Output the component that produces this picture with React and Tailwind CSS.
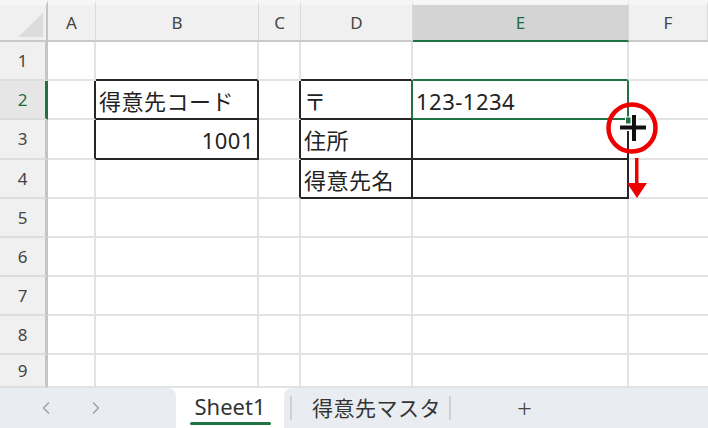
import { ChevronLeft, ChevronRight } from 'lucide-react';

const cols = [
  { key: 'A', w: 48 },
  { key: 'B', w: 163 },
  { key: 'C', w: 42 },
  { key: 'D', w: 112 },
  { key: 'E', w: 216 },
  { key: 'F', w: 79 },
];

const rowHeights = [39, 39, 40, 39, 39, 39, 39, 39, 33];

// cells that carry the black table border
const boxed = new Set(['B2', 'B3', 'D2', 'D3', 'D4', 'E2', 'E3', 'E4']);

const values = {
  B2: { text: '得意先コード' },
  B3: { text: '1001', right: true },
  D2: { text: '〒' },
  D3: { text: '住所' },
  D4: { text: '得意先名' },
  E2: { text: '123-1234' },
};

function cellId(r, c) {
  if (c < 0 || c >= cols.length) return '';
  return cols[c].key + r;
}

function rightClass(r, c) {
  const me = cellId(r, c);
  const next = cellId(r, c + 1);
  if (me === 'E2' || next === 'E2') return 'border-r-[#217346]';
  if (boxed.has(me) || boxed.has(next)) return 'border-r-[#262626]';
  return 'border-r-[#e3e3e3]';
}

function bottomClass(r, c) {
  const me = cellId(r, c);
  const below = cellId(r + 1, c);
  if (me === 'E2' || below === 'E2') return 'border-b-[#217346]';
  if (boxed.has(me) || boxed.has(below)) return 'border-b-[#262626]';
  return 'border-b-[#e3e3e3]';
}

function Cell({ r, c }) {
  const id = cellId(r, c);
  const v = values[id];
  const isLast = c === cols.length - 1;
  return (
    <div
      className={`flex items-center border-b-2 ${isLast ? '' : 'border-r-2'} ${rightClass(r, c)} ${bottomClass(r, c)} px-[3px] overflow-hidden ${v && v.right ? 'justify-end pr-[3px]' : ''}`}
    >
      {v && (
        <span className="text-[22px] tracking-[0.5px] leading-none text-[#222] whitespace-nowrap pt-[2px]">{v.text}</span>
      )}
    </div>
  );
}

export default function App() {
  return (
    <div
      className="relative w-[708px] h-[428px] overflow-hidden bg-white"
      style={{ fontFamily: '"Noto Sans", "Noto Sans CJK JP", sans-serif' }}
    >
      <div className="grid grid-cols-[48px_48px_163px_42px_112px_216px_1fr] grid-rows-[42px_39px_39px_40px_39px_39px_39px_39px_39px_33px] h-[388px]">
        {/* select-all corner */}
        <div className="relative bg-[#f0f0f0] border-t-[5px] border-[#f5f6f8] border-b-2 border-b-[#c9c9c9] border-r-2 border-r-[#c4c4c4]">
          <svg width="48" height="37" className="block">
            <polygon points="18,32 43,32 43,8" fill="#dcdcdc" />
          </svg>
        </div>
        {cols.map((col) => {
          const sel = col.key === 'E';
          return (
            <div
              key={col.key}
              className={`flex items-center justify-center border-t-[5px] border-t-[#f5f6f8] border-b-2 border-r ${
                sel ? 'bg-[#d4d4d4] border-b-[#217346] text-[#1b6b3c]' : 'bg-[#f0f0f0] border-b-[#c9c9c9] text-[#444]'
              } border-r-[#dadada] text-[17px]`}
            >
              {col.key}
            </div>
          );
        })}
        {rowHeights.map((h, i) => {
          const r = i + 1;
          const sel = r === 2;
          return [
            <div
              key={'h' + r}
              className={`flex items-center justify-center border-r-[3px] border-b-2 border-b-[#dddddd] text-[17px] ${
                sel ? 'bg-[#e6e6e6] border-r-[#217346] text-[#1b6b3c]' : 'bg-[#f0f0f0] border-r-[#c4c4c4] text-[#444]'
              }`}
            >
              {r}
            </div>,
            ...cols.map((col, c) => <Cell key={col.key + r} r={r} c={c} />),
          ];
        })}
      </div>

      {/* sheet tabs */}
      <div className="flex h-[40px] bg-white text-[#333]">
        <div className="w-[176px] bg-[#e9ecf0] rounded-tr-[8px] flex items-center pl-[36px] gap-[30px] text-[#9a9a9a]">
          <ChevronLeft size={20} strokeWidth={1.5} />
          <ChevronRight size={20} strokeWidth={1.5} />
        </div>
        <div className="w-[108px] flex flex-col items-center justify-end">
          <span className="text-[22px] leading-none mb-[5px]">Sheet1</span>
          <div className="w-[81px] h-[3px] rounded-full bg-[#217346] mb-[3px]" />
        </div>
        <div className="flex-1 bg-[#e9ecf0] rounded-tl-[8px] flex items-center">
          <div className="ml-[6px] w-[2px] h-[24px] bg-[#cdd0d4]" />
          <span className="ml-[20px] text-[21px] tracking-[0.5px] leading-none">得意先マスタ</span>
          <div className="ml-[8px] w-[2px] h-[24px] bg-[#cdd0d4]" />
          <span className="ml-[66px] text-[26px] leading-none font-light text-[#444]">+</span>
        </div>
      </div>

      {/* fill handle, cursor and drag annotation */}
      <svg className="absolute left-[598px] top-[96px]" width="70" height="108" viewBox="598 96 70 108">
        <rect x="625.5" y="117" width="7" height="7" fill="#217346" stroke="#fff" strokeWidth="1" />
        <circle cx="632" cy="128" r="23.5" fill="none" stroke="#ee0000" strokeWidth="4.5" />
        <path d="M634 115 V141 M620 127.5 H646" stroke="#fff" strokeWidth="7" />
        <path d="M634 115 V141 M620 127.5 H646" stroke="#111" strokeWidth="4" />
        <rect x="635" y="158" width="3.5" height="27" fill="#ee0000" />
        <polygon points="627,183 647,183 637,198" fill="#ee0000" />
      </svg>
    </div>
  );
}
